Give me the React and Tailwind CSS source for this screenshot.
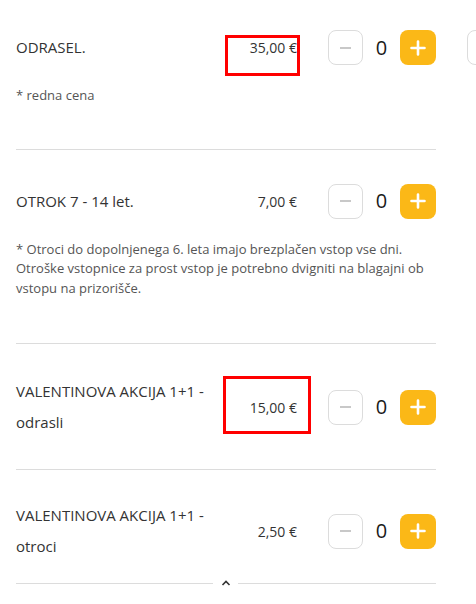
import React from "react";

function Counter() {
  return (
    <div className="flex items-center shrink-0">
      <button className="w-[35px] h-[35px] rounded-[8px] border border-[#dcdcdc] bg-white flex items-center justify-center">
        <span className="block w-[11px] h-[2px] bg-[#c8c8c8]" />
      </button>
      <div className="w-[37px] text-center text-[20px] leading-none text-[#1a1a1a]">0</div>
      <button className="w-[36px] h-[35px] rounded-[8px] bg-[#fbb817] flex items-center justify-center">
        <svg width="16" height="16" viewBox="0 0 16 16">
          <path d="M8 1.5v13M1.5 8h13" stroke="#fff" strokeWidth="2.6" strokeLinecap="round" />
        </svg>
      </button>
    </div>
  );
}

function Row({ title, price, className = "" }) {
  return (
    <div className={"flex items-center " + className}>
      <div className="w-[200px] text-[15px] leading-[31px] text-[#333]">{title}</div>
      <div className="w-[81px] text-right text-[14px] text-[#333]">{price}</div>
      <div className="ml-[31px]">
        <Counter />
      </div>
    </div>
  );
}

export default function App() {
  return (
    <div className="relative w-[476px] h-[604px] overflow-hidden bg-white font-['Open_Sans',sans-serif]">
      <div className="flex">
        <div className="ml-4 w-[420px] shrink-0">
          <Row title="ODRASEL." price="35,00 €" className="mt-[30px]" />
          <p className="mt-[21px] text-[13px] leading-[19.5px] text-[#555]">* redna cena</p>
          <div className="mt-[43px] h-px bg-[#dcdcdc]" />

          <Row title="OTROK 7 - 14 let." price="7,00 €" className="mt-[34px]" />
          <p className="mt-[21px] text-[13px] leading-[19.5px] text-[#555]">
            * Otroci do dopolnjenega 6. leta imajo brezplačen vstop vse dni. Otroške vstopnice za prost vstop je potrebno dvigniti na blagajni ob vstopu na prizorišče.
          </p>
          <div className="mt-[45px] h-px bg-[#dcdcdc]" />

          <Row title="VALENTINOVA AKCIJA 1+1 - odrasli" price="15,00 €" className="mt-[32px]" />
          <div className="mt-[31px] h-px bg-[#dcdcdc]" />

          <Row title="VALENTINOVA AKCIJA 1+1 - otroci" price="2,50 €" className="mt-[30px]" />
          <div className="mt-[18px] flex items-center">
            <div className="flex-1 h-px bg-[#dcdcdc]" />
            <div className="w-[25px] flex justify-center">
              <svg width="10" height="6" viewBox="0 0 10 6">
                <path d="M1.5 5L5 1.5 8.5 5" fill="none" stroke="#333" strokeWidth="1.6" />
              </svg>
            </div>
            <div className="w-[198px] h-px bg-[#dcdcdc]" />
          </div>
        </div>
        <div className="ml-[31px] mt-[30px]">
          <div className="w-[35px] h-[35px] rounded-[8px] border border-[#dcdcdc]" />
        </div>
      </div>

      <div className="absolute left-[225px] top-[35px] w-[75px] h-[41px] border-[3px] border-[#f00]" />
      <div className="absolute left-[223px] top-[376px] w-[88px] h-[58px] border-[3px] border-[#f00]" />
    </div>
  );
}
